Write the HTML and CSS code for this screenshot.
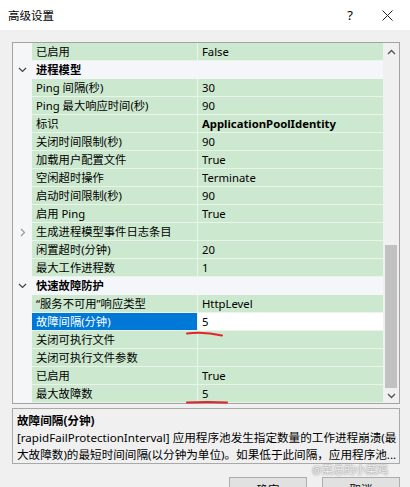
FILE: index.html
```html
<!DOCTYPE html>
<html lang="zh-CN">
<head>
<meta charset="utf-8">
<title>高级设置</title>
<link rel="stylesheet" href="styles.css">
</head>
<body>
<div class="titlebar">
  <span class="title">高级设置</span>
  <span class="help">?</span>
  <span class="close"><svg width="11" height="11" viewBox="0 0 11 11"><path d="M0.5 0.5L10.5 10.5M10.5 0.5L0.5 10.5" stroke="#222" stroke-width="1"/></svg></span>
</div>
<div class="content">
  <div class="grid">
    <div class="rows">
      <div class="row"><div class="gut"></div><div class="name">已启用</div><div class="val">False</div></div>
      <div class="row section"><div class="gut"><svg class="chev" width="9" height="6" viewBox="0 0 9 6"><path d="M1 1L4.5 4.5L8 1" fill="none" stroke="#444" stroke-width="1.2"/></svg></div><div class="name">进程模型</div></div>
      <div class="row"><div class="gut"></div><div class="name">Ping 间隔(秒)</div><div class="val">30</div></div>
      <div class="row"><div class="gut"></div><div class="name">Ping 最大响应时间(秒)</div><div class="val">90</div></div>
      <div class="row"><div class="gut"></div><div class="name">标识</div><div class="val strong">ApplicationPoolIdentity</div></div>
      <div class="row"><div class="gut"></div><div class="name">关闭时间限制(秒)</div><div class="val">90</div></div>
      <div class="row"><div class="gut"></div><div class="name">加载用户配置文件</div><div class="val">True</div></div>
      <div class="row"><div class="gut"></div><div class="name">空闲超时操作</div><div class="val">Terminate</div></div>
      <div class="row"><div class="gut"></div><div class="name">启动时间限制(秒)</div><div class="val">90</div></div>
      <div class="row"><div class="gut"></div><div class="name">启用 Ping</div><div class="val">True</div></div>
      <div class="row"><div class="gut"><svg class="chev" width="6" height="9" viewBox="0 0 6 9"><path d="M1 1L4.5 4.5L1 8" fill="none" stroke="#999" stroke-width="1.2"/></svg></div><div class="name">生成进程模型事件日志条目</div><div class="val"></div></div>
      <div class="row"><div class="gut"></div><div class="name">闲置超时(分钟)</div><div class="val">20</div></div>
      <div class="row"><div class="gut"></div><div class="name">最大工作进程数</div><div class="val">1</div></div>
      <div class="row section"><div class="gut"><svg class="chev" width="9" height="6" viewBox="0 0 9 6"><path d="M1 1L4.5 4.5L8 1" fill="none" stroke="#444" stroke-width="1.2"/></svg></div><div class="name">快速故障防护</div></div>
      <div class="row"><div class="gut"></div><div class="name">“服务不可用”响应类型</div><div class="val">HttpLevel</div></div>
      <div class="row selected"><div class="gut"></div><div class="name">故障间隔(分钟)</div><div class="val">5</div></div>
      <div class="row"><div class="gut"></div><div class="name">关闭可执行文件</div><div class="val"></div></div>
      <div class="row"><div class="gut"></div><div class="name">关闭可执行文件参数</div><div class="val"></div></div>
      <div class="row"><div class="gut"></div><div class="name">已启用</div><div class="val">True</div></div>
      <div class="row"><div class="gut"></div><div class="name">最大故障数</div><div class="val">5</div></div>
    </div>
    <div class="scrollbar">
      <div class="arrow up"><svg width="9" height="6" viewBox="0 0 9 6"><path d="M1 5L4.5 1.5L8 5" fill="none" stroke="#555" stroke-width="1.4"/></svg></div>
      <div class="track"></div>
      <div class="thumb"></div>
      <div class="arrow down"><svg width="9" height="6" viewBox="0 0 9 6"><path d="M1 1L4.5 4.5L8 1" fill="none" stroke="#555" stroke-width="1.4"/></svg></div>
    </div>
  </div>
  <div class="desc">
    <div class="desc-title">故障间隔(分钟)</div>
    <div class="desc-line">[rapidFailProtectionInterval] 应用程序池发生指定数量的工作进程崩溃(最</div>
    <div class="desc-line">大故障数)的最短时间间隔(以分钟为单位)。如果低于此间隔，应用程序池...</div>
  </div>
  <div class="buttons">
    <button class="btn">确定</button>
    <button class="btn">取消</button>
  </div>
</div>
<div class="watermark">@菜总的小菜鸡</div>
<svg class="marks" width="410" height="487" viewBox="0 0 410 487">
  <path d="M187 333.5 Q204 331.5 222 335.5" fill="none" stroke="#e0262a" stroke-width="2" stroke-linecap="round"/>
  <path d="M187 402.5 Q207 401.5 227 402.5" fill="none" stroke="#e0262a" stroke-width="2" stroke-linecap="round"/>
</svg>
</body>
</html>
```
FILE: styles.css
```css
* { box-sizing: border-box; }
html, body { margin: 0; padding: 0; }
body {
  width: 410px;
  height: 487px;
  overflow: hidden;
  position: relative;
  background: #f0f0f0;
  color: #000;
  font-family: "Noto Sans", "Noto Sans CJK SC", sans-serif;
  font-size: 11.3px;
}
.titlebar {
  height: 30px;
  background: #ffffff;
  display: flex;
  align-items: center;
  padding-left: 8px;
}
.title { font-size: 11.5px; flex: 1; }
.help {
  width: 40px;
  text-align: center;
  font-size: 13px;
  margin-right: 0;
}
.close {
  width: 40px;
  display: flex;
  justify-content: center;
  padding-right: 6px;
}
.content { padding: 12px 10px 0 12px; }
.grid {
  display: flex;
  width: 388px;
  border: 1px solid #a3a3a3;
  background: #f5f6f7;
}
.rows { width: 370px; }
.row {
  display: flex;
  height: 18px;
}
.gut {
  width: 19px;
  flex: none;
  display: flex;
  align-items: center;
  justify-content: center;
  background: #f5f6f7;
}
.name {
  width: 165px;
  flex: none;
  padding-left: 4px;
  line-height: 17px;
  background: #cce8cf;
  border-bottom: 1px solid #e9f4ea;
  white-space: nowrap;
  overflow: hidden;
}
.val {
  flex: 1;
  padding-left: 4px;
  line-height: 17px;
  background: #cce8cf;
  border-left: 1px solid #e9f4ea;
  border-bottom: 1px solid #e9f4ea;
  white-space: nowrap;
  overflow: hidden;
}
.val.strong { font-weight: 700; }
.section .name {
  flex: 1;
  font-weight: 700;
  background: #f4f6fa;
  border-bottom-color: #f4f6fa;
}
.selected .name { background: #0078d7; color: #fff; }
.selected .val { background: #ffffff; }
.scrollbar {
  width: 16px;
  display: flex;
  flex-direction: column;
  background: #f0f0f0;
}
.arrow {
  display: flex;
  align-items: center;
  justify-content: center;
}
.arrow.up { height: 17px; }
.arrow.down { height: 15px; }
.track { flex: 1; }
.thumb {
  height: 143px;
  margin: 0 2px 0 2px;
  background: #c1c1c1;
}
.desc {
  margin-top: 4px;
  width: 388px;
  height: 56px;
  border: 1px solid #a9a9a9;
  padding: 3px 0 0 4px;
  overflow: hidden;
  white-space: nowrap;
  font-size: 11.6px;
  line-height: 17px;
}
.desc-title { font-weight: 700; }
.buttons {
  display: flex;
  justify-content: flex-end;
  gap: 15px;
  margin-top: 13px;
}
.btn {
  width: 78px;
  height: 24px;
  background: #e1e1e1;
  border: 1px solid #adadad;
  font-family: "Noto Sans", "Noto Sans CJK SC", sans-serif;
  font-size: 11.5px;
  color: #000;
  padding: 0;
}
.watermark {
  position: absolute;
  left: 312px;
  top: 461px;
  font-size: 11px;
  color: rgba(255, 255, 255, 0.9);
  text-shadow: 0 0 1px #888, 0 0 2px #999;
  white-space: nowrap;
}
.marks {
  position: absolute;
  left: 0;
  top: 0;
  pointer-events: none;
}
```
